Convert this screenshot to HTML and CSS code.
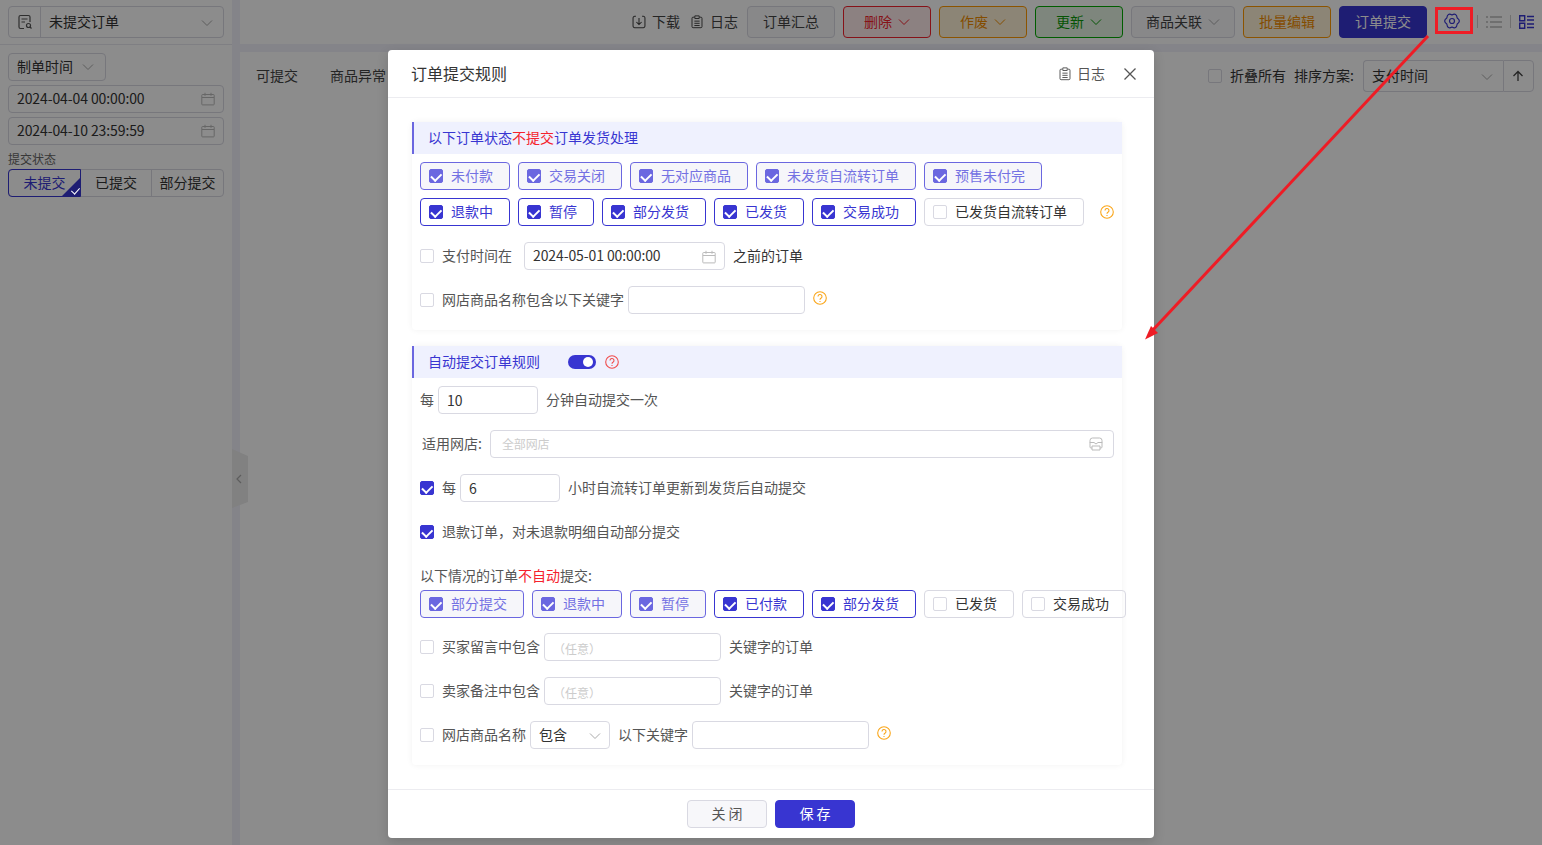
FILE: index.html
```html
<!DOCTYPE html>
<html lang="zh-CN">
<head>
<meta charset="utf-8">
<title>订单提交规则</title>
<link rel="stylesheet" href="styles.css">
</head>
<body>
<svg class="sprite" aria-hidden="true">
  <symbol id="i-chev" viewBox="0 0 12 12"><path d="M1 3.5 6 8.5 11 3.5" fill="none" stroke="currentColor" stroke-width="1"/></symbol>
  <symbol id="i-cal" viewBox="0 0 14 14"><path d="M1.5 2.5h11a.7.7 0 0 1 .7.7v9a.7.7 0 0 1-.7.7h-11a.7.7 0 0 1-.7-.7v-9a.7.7 0 0 1 .7-.7ZM1 5.5h12M4 .8v3M10 .8v3" fill="none" stroke="currentColor"/></symbol>
  <symbol id="i-log" viewBox="0 0 14 16"><path d="M4 2.5H2.5a1.2 1.2 0 0 0-1.2 1.2v9.6a1.2 1.2 0 0 0 1.2 1.2h9a1.2 1.2 0 0 0 1.2-1.2V3.7a1.2 1.2 0 0 0-1.2-1.2H10M4.5 1h5v3h-5ZM4 7h6M4 9.5h6M4 12h6" fill="none" stroke="currentColor" stroke-width="1.1"/></symbol>
  <symbol id="i-dl" viewBox="0 0 16 16"><path d="M4.500 1.500H3a1.800 1.800 0 0 0-1.800 1.800v9.400A1.800 1.800 0 0 0 3 14.500h10a1.800 1.800 0 0 0 1.800-1.800V3.300A1.800 1.800 0 0 0 13 1.500h-1.500M8 3.500v7M5 8l3 3 3-3" fill="none" stroke="currentColor" stroke-width="1.200"/></symbol>
  <symbol id="i-help" viewBox="0 0 14 14"><circle cx="7" cy="7" r="6.300" fill="none" stroke="currentColor" stroke-width="1.100"/><path d="M5 5.500a2 2 0 1 1 3 1.700c-.7.4-1 .8-1 1.500M7 10v1" fill="none" stroke="currentColor" stroke-width="1.100"/></symbol>
  <symbol id="i-gear" viewBox="0 0 16 16"><path d="M8 2Q12.500-.5 13.200 5 17.500 8 13.200 11 12.500 16.500 8 14 3.500 16.500 2.800 11-1.500 8 2.800 5 3.500-.5 8 2Z" fill="none" stroke="currentColor" stroke-width="1.200" stroke-linejoin="round"/><circle cx="8" cy="8" r="2.500" fill="none" stroke="currentColor" stroke-width="1.200"/></symbol>
  <symbol id="i-list" viewBox="0 0 16 14"><path d="M0 2h2M4 2h12M0 7h2M4 7h12M0 12h2M4 12h12" fill="none" stroke="currentColor" stroke-width="1.300"/></symbol>
  <symbol id="i-grid" viewBox="0 0 15 14"><path d="M.7.7h5v5h-5ZM.7 8.300h5v5h-5ZM8 1.500h7M8 5h7M8 9h7M8 12.500h7" fill="none" stroke="currentColor" stroke-width="1.400"/></symbol>
  <symbol id="i-shop" viewBox="0 0 14 14"><path d="M1 6V3.500A2.500 2.500 0 0 1 3.500 1h7A2.500 2.500 0 0 1 13 3.500V6M1 5.500h4l2 1.500 2-1.500h4V10a1 1 0 0 1-1 1h-1M1 5.500V10a1 1 0 0 0 1 1h1M3 9h8v4H3Z" fill="none" stroke="currentColor"/></symbol>
  <symbol id="i-doc" viewBox="0 0 16 16"><path d="M7 14.500H3.500A1.500 1.500 0 0 1 2 13V3a1.500 1.500 0 0 1 1.500-1.500h8A1.500 1.500 0 0 1 13 3v5M4.500 5h6M4.500 8h3.500" fill="none" stroke="currentColor" stroke-width="1.200"/><circle cx="11.500" cy="11.500" r="2" fill="none" stroke="currentColor" stroke-width="1.200"/><path d="m13 13 1.500 1.500" stroke="currentColor" stroke-width="1.200"/></symbol>
</svg>

<div class="app">
  <aside class="side">
    <div class="side-top">
      <div class="viewsel">
        <span class="viewsel-ico"><svg class="ico16"><use href="#i-doc"/></svg></span>
        <span class="viewsel-txt">未提交订单</span>
        <svg class="chev"><use href="#i-chev"/></svg>
      </div>
    </div>
    <div class="side-body">
      <div class="box box-time">制单时间<svg class="chev"><use href="#i-chev"/></svg></div>
      <div class="box box-date"><span>2024-04-04 00:00:00</span><svg class="cal"><use href="#i-cal"/></svg></div>
      <div class="box box-date"><span>2024-04-10 23:59:59</span><svg class="cal"><use href="#i-cal"/></svg></div>
      <div class="side-label">提交状态</div>
      <div class="seg">
        <span class="seg-item seg-on">未提交</span>
        <span class="seg-item seg-mid">已提交</span>
        <span class="seg-item seg-last">部分提交</span>
      </div>
    </div>
  </aside>
  <main class="main">
    <header class="tools">
      <span class="tlink tl-dl"><svg class="ico14"><use href="#i-dl"/></svg>下载</span>
      <span class="tlink tl-log"><svg class="ico14"><use href="#i-log"/></svg>日志</span>
      <span class="btn w88">订单汇总</span>
      <span class="btn w88 b-red">删除<svg class="chev"><use href="#i-chev"/></svg></span>
      <span class="btn w88 b-org">作废<svg class="chev"><use href="#i-chev"/></svg></span>
      <span class="btn w88 b-grn">更新<svg class="chev"><use href="#i-chev"/></svg></span>
      <span class="btn w104">商品关联<svg class="chev"><use href="#i-chev"/></svg></span>
      <span class="btn w88 b-org">批量编辑</span>
      <span class="btn w88 b-pri">订单提交</span>
      <svg class="ico-gear"><use href="#i-gear"/></svg>
      <i class="vsep vsep-a"></i>
      <svg class="ico-list"><use href="#i-list"/></svg>
      <i class="vsep"></i>
      <svg class="ico-grid"><use href="#i-grid"/></svg>
    </header>
    <section class="content">
      <div class="content-bar">
        <span class="tab">可提交</span>
        <span class="tab">商品异常</span>
        <div class="sortbar">
          <i class="cb"></i>
          <span class="sb-fold">折叠所有</span>
          <span class="sb-lab">排序方案:</span>
          <div class="sortsel"><span class="sortsel-txt">支付时间</span><svg class="chev"><use href="#i-chev"/></svg></div>
          <div class="sortbtn"><svg class="arrow-up" viewBox="0 0 12 12"><path d="M6 11V1.500M1.500 6 6 1.500 10.500 6" fill="none" stroke="currentColor" stroke-width="1.300"/></svg></div>
        </div>
      </div>
    </section>
  </main>
</div>

<span class="handle"><svg class="handle-chev" viewBox="0 0 8 12"><path d="M6 2 2 6l4 4" fill="none" stroke="currentColor" stroke-width="1.200"/></svg></span>

<div class="mask"></div>

<div class="modal">
  <div class="m-head">
    <span class="m-title">订单提交规则</span>
    <span class="m-log"><svg class="ico14"><use href="#i-log"/></svg>日志</span>
    <svg class="m-close" viewBox="0 0 12 12"><path d="M.5.500l11 11M11.500.500l-11 11" stroke="currentColor" stroke-width="1.300"/></svg>
  </div>
  <div class="m-body">
    <section class="card">
      <h3 class="card-h">以下订单状态<em>不提交</em>订单发货处理</h3>
      <div class="chips">
        <label class="chip dis"><i class="cb on"></i>未付款</label>
        <label class="chip dis"><i class="cb on"></i>交易关闭</label>
        <label class="chip dis"><i class="cb on"></i>无对应商品</label>
        <label class="chip dis"><i class="cb on"></i>未发货自流转订单</label>
        <label class="chip dis"><i class="cb on"></i>预售未付完</label>
      </div>
      <div class="chips">
        <label class="chip act"><i class="cb on"></i>退款中</label>
        <label class="chip act"><i class="cb on"></i>暂停</label>
        <label class="chip act"><i class="cb on"></i>部分发货</label>
        <label class="chip act"><i class="cb on"></i>已发货</label>
        <label class="chip act"><i class="cb on"></i>交易成功</label>
        <label class="chip"><i class="cb"></i>已发货自流转订单</label>
        <svg class="help help-chips"><use href="#i-help"/></svg>
      </div>
      <div class="row mt16">
        <i class="cb"></i><span class="t ml8">支付时间在</span>
        <div class="field w201 ml12"><span>2024-05-01 00:00:00</span><svg class="cal"><use href="#i-cal"/></svg></div>
        <span class="t dark ml8">之前的订单</span>
      </div>
      <div class="row mt16 pb16">
        <i class="cb"></i><span class="t ml8">网店商品名称包含以下关键字</span>
        <input class="field w177 ml4" type="text">
        <svg class="help ml8 up2"><use href="#i-help"/></svg>
      </div>
    </section>

    <section class="card mt16">
      <h3 class="card-h">自动提交订单规则<span class="toggle"></span><svg class="help red"><use href="#i-help"/></svg></h3>
      <div class="row mt8">
        <span class="t">每</span><input class="field w100 ml4" type="text" value="10"><span class="t ml8">分钟自动提交一次</span>
      </div>
      <div class="row mt16">
        <span class="t lab-shop">适用网店:</span>
        <div class="field grow ml8"><span class="ph">全部网店</span><svg class="cal shop-ico"><use href="#i-shop"/></svg></div>
      </div>
      <div class="row mt16">
        <i class="cb on"></i><span class="t ml8">每</span><input class="field w100 ml4" type="text" value="6"><span class="t ml8">小时自流转订单更新到发货后自动提交</span>
      </div>
      <div class="row mt16">
        <i class="cb on"></i><span class="t ml8">退款订单，对未退款明细自动部分提交</span>
      </div>
      <div class="row mt16"><span class="t">以下情况的订单<em>不自动</em>提交:</span></div>
      <div class="chips mt0">
        <label class="chip dis"><i class="cb on"></i>部分提交</label>
        <label class="chip dis"><i class="cb on"></i>退款中</label>
        <label class="chip dis"><i class="cb on"></i>暂停</label>
        <label class="chip act"><i class="cb on"></i>已付款</label>
        <label class="chip act"><i class="cb on"></i>部分发货</label>
        <label class="chip"><i class="cb"></i>已发货</label>
        <label class="chip"><i class="cb"></i>交易成功</label>
      </div>
      <div class="row mt15">
        <i class="cb"></i><span class="t ml8">买家留言中包含</span>
        <input class="field w177 ml4 phi" type="text" placeholder="（任意）"><span class="t ml8">关键字的订单</span>
      </div>
      <div class="row mt16">
        <i class="cb"></i><span class="t ml8">卖家备注中包含</span>
        <input class="field w177 ml4 phi" type="text" placeholder="（任意）"><span class="t ml8">关键字的订单</span>
      </div>
      <div class="row mt16 pb16">
        <i class="cb"></i><span class="t ml8">网店商品名称</span>
        <div class="field w80 ml4"><span class="dark">包含</span><svg class="chev"><use href="#i-chev"/></svg></div>
        <span class="t ml8">以下关键字</span>
        <input class="field w177 ml4" type="text">
        <svg class="help ml8 up2"><use href="#i-help"/></svg>
      </div>
    </section>
  </div>
  <div class="m-foot">
    <span class="fbtn">关 闭</span>
    <span class="fbtn fpri">保 存</span>
  </div>
</div>

<svg class="note" viewBox="0 0 1542 845" aria-hidden="true">
  <rect x="1436.500" y="8.500" width="35" height="24" fill="none" stroke="#ee1c25" stroke-width="3"/>
  <path d="M1428 36 1151 332" stroke="#ee1c25" stroke-width="3" fill="none"/>
  <path d="M1145 339.500 1151 326 1158 333Z" fill="#ee1c25"/>
</svg>
</body>
</html>
```
FILE: styles.css
```css
* { box-sizing: border-box; }
html, body { margin: 0; height: 100%; overflow: hidden; }
body {
  font-family: "Noto Sans CJK SC", "Noto Sans", sans-serif;
  font-size: 14px;
  line-height: 20px;
  color: #333;
  background: #f0f0fa;
}
em { font-style: normal; color: #f5222d; }
i { font-style: normal; }
svg { flex: none; display: block; }
.sprite { position: absolute; width: 0; height: 0; }

.app { display: flex; gap: 8px; height: 845px; }

/* sidebar */
.side { width: 232px; background: #fff; flex: none; }
.side-top { height: 45px; padding: 6px 8px 0; border-bottom: 1px solid #e8e8ee; }
.viewsel { display: flex; align-items: center; height: 32px; border: 1px solid #d9d9e2; border-radius: 4px; }
.viewsel-ico { width: 32px; height: 30px; border-right: 1px solid #d9d9e2; display: flex; align-items: center; justify-content: center; color: #555; }
.viewsel-txt { margin-left: 8px; flex: 1; padding-bottom: 2px; }
.viewsel .chev { margin-right: 10px; }
.ico16 { width: 16px; height: 16px; }
.ico14 { width: 14px; height: 14px; }
.chev { width: 12px; height: 12px; color: #aaa; margin-top: 2px; }
.cal { width: 14px; height: 14px; color: #bbb; margin-left: auto; margin-top: 2px; }
.side-body { padding: 8px 8px 0; display: flex; flex-direction: column; gap: 4px; }
.box { display: flex; align-items: center; height: 28px; border: 1px solid #d9d9e2; border-radius: 4px; padding: 0 8px 2px; }
.box-date span, .field > span { letter-spacing: -.1px; }
.box-time { width: 98px; }
.box-time .chev { margin-left: 9px; }
.side-label { font-size: 12px; line-height: 16px; height: 18px; margin-top: 2px; margin-bottom: -4px; color: #666; }
.seg { display: flex; height: 28px; border: 1px solid #d9d9e2; border-radius: 4px; }
.seg-item { display: flex; align-items: center; justify-content: center; position: relative; padding-bottom: 2px; }
.seg-on { width: 73px; margin: -1px 0 -1px -1px; border: 1px solid #3835d1; border-radius: 4px 0 0 4px; color: #3835d1; overflow: hidden; }
.seg-on::after { content: ""; position: absolute; right: 0; bottom: 0; border: 9px solid #3835d1; border-top-color: transparent; border-left-color: transparent; }
.seg-on::before { content: ""; position: absolute; right: 2.500px; bottom: 2.500px; width: 4px; height: 7px; border: solid #fff; border-width: 0 1px 1px 0; transform: rotate(42deg); z-index: 1; }
.seg-mid { width: 70px; }
.seg-last { flex: 1; border-left: 1px solid #d9d9e2; }

/* main */
.main { flex: 1; display: flex; flex-direction: column; gap: 8px; min-width: 0; }
.tools { height: 44px; flex: none; background: #fff; display: flex; align-items: flex-start; justify-content: flex-end; padding: 6px 8px 0 0; gap: 8px; }
.tlink { display: flex; align-items: center; gap: 6px; height: 32px; color: #444; padding-bottom: 2px; }
.tlink svg { margin-top: 2px; }
.tl-dl { margin-right: 2px; }
.tl-log { margin-right: 1px; }
.btn { height: 32px; display: flex; align-items: center; justify-content: center; gap: 6px; border: 1px solid #d9d9e2; border-radius: 4px; background: #f7f7fa; color: #444; padding-bottom: 2px; }
.w88 { width: 88px; }
.w104 { width: 104px; }
.b-red { border-color: #f5222d; color: #f5222d; background: #ffecec; }
.b-org { border-color: #f90; color: #f08c00; background: #fff3d8; }
.b-grn { border-color: #0a0; color: #0a9a0a; background: #e6f5e3; }
.b-red .chev { color: #f5222d; }
.b-org .chev { color: #f08c00; }
.b-grn .chev { color: #0a9a0a; }
.b-pri { background: #3835d1; border-color: #3835d1; color: #fff; }
.ico-gear { width: 16px; height: 16px; color: #3835d1; margin: 7px 0 0 9px; }
.vsep { width: 1px; height: 13px; background: #ccc; margin: 9px 0 0 0; }
.vsep-a { margin-left: 9px; }
.ico-list { width: 16px; height: 14px; color: #bbb; margin: 9px 0 0 0; }
.ico-grid { width: 15px; height: 14px; color: #3835d1; margin: 9px 0 0 0; }
.content { flex: 1; background: #fff; padding: 8px 8px 0 16px; }
.content-bar { display: flex; align-items: center; gap: 32px; height: 32px; }
.tab { color: #444; padding-bottom: 2px; }
.sortbar { margin-left: auto; display: flex; align-items: center; }
.sb-fold { margin-left: 8px; padding-bottom: 2px; }
.sb-lab { margin-left: 8px; margin-right: 9px; padding-bottom: 2px; }
.sortsel { width: 140px; height: 32px; border: 1px solid #d9d9e2; border-right: 0; border-radius: 4px 0 0 4px; display: flex; align-items: center; padding: 0 10px 0 8px; }
.sortsel-txt { flex: 1; padding-bottom: 2px; }
.sortbtn { width: 31px; height: 32px; border: 1px solid #d9d9e2; border-radius: 0 4px 4px 0; display: flex; align-items: center; justify-content: center; color: #444; padding-right: 2px; }
.arrow-up { width: 12px; height: 12px; }

/* collapse handle */
.handle { position: absolute; left: 232px; top: 449px; width: 16px; height: 59px; background: #ebebeb; clip-path: polygon(0 0, 100% 12%, 100% 90%, 0 100%); display: flex; align-items: center; justify-content: center; color: #aaa; padding-right: 2px; }
.handle-chev { width: 8px; height: 12px; }

.mask { position: absolute; inset: 0; background: rgba(0, 0, 0, .45); }

/* modal */
.modal { position: absolute; left: 388px; top: 50px; width: 766px; height: 788px; background: #fff; border-radius: 4px; display: flex; flex-direction: column; box-shadow: 0 4px 12px rgba(0, 0, 0, .15); }
.m-head { height: 48px; flex: none; display: flex; align-items: center; padding: 0 18px 0 24px; border-bottom: 1px solid #ececf0; }
.m-title { font-size: 16px; flex: 1; padding-bottom: 2px; margin-left: -1px; }
.m-log { display: flex; align-items: center; gap: 5px; color: #555; padding-bottom: 2px; }
.m-log svg { margin-top: 2px; }
.m-close { width: 12px; height: 12px; margin-left: 19px; color: #555; }
.m-body { flex: 1; padding: 24px 32px 0 24px; }
.card { border-radius: 4px; box-shadow: 0 0 6px rgba(0, 0, 0, .06); }
.card-h { margin: 0; height: 32px; background: #eff1fe; border-left: 2px solid #6b67e0; padding: 0 0 2px 14px; font-size: 14px; font-weight: 400; color: #3835d1; display: flex; align-items: center; }
.m-foot { height: 49px; flex: none; border-top: 1px solid #ececf0; display: flex; justify-content: center; gap: 8px; padding-top: 10px; }
.fbtn { width: 80px; height: 28px; border: 1px solid #d9d9e2; border-radius: 4px; background: #f7f7fa; display: flex; align-items: center; justify-content: center; color: #555; padding-bottom: 2px; }
.fpri { background: #3835d1; border-color: #3835d1; color: #fff; }

/* rows */
.chips { display: flex; gap: 8px; padding-left: 8px; align-items: center; margin-top: 8px; white-space: nowrap; }
.chip { display: flex; align-items: center; height: 28px; padding: 0 16px 2px 8px; border: 1px solid #d9d9e2; border-radius: 4px; color: #333; }
.chip .cb { margin-right: 8px; margin-top: 2px; }
.dis { border-color: #6b67e0; background: #f6f6fa; color: #7471e3; }
.act { border-color: #3835d1; color: #3835d1; }
.cb { position: relative; width: 14px; height: 14px; flex: none; border: 1px solid #d9d9e2; border-radius: 2px; background: #fff; display: block; }
.cb.on { background: #3835d1; border-color: #3835d1; }
.dis .cb.on { background: #6b67e0; border-color: #6b67e0; }
.cb.on::after { content: ""; position: absolute; left: 3.300px; top: 1px; width: 4.500px; height: 7.500px; border: solid #fff; border-width: 0 2px 2px 0; transform: rotate(45deg); }
.row { display: flex; align-items: center; height: 28px; padding-left: 8px; }
.t { color: #555; white-space: nowrap; padding-bottom: 2px; }
.dark { color: #333; }
.field { height: 28px; border: 1px solid #d9d9e2; border-radius: 4px; padding: 0 8px; display: flex; align-items: center; background: #fff; font: inherit; color: #333; outline: 0; flex: none; }
.field > span { padding-bottom: 2px; }
.field > .ph { font-size: 12px; color: #ccc; padding: 0 0 0 3px; }
.field .chev { margin-left: auto; }
.shop-ico { margin: 0 2px 0 auto; }
.w201 { width: 201px; }
.w177 { width: 177px; }
.w100 { width: 100px; }
.w80 { width: 80px; }
.grow { width: 624px; }
.phi { padding-top: 2px; }
.phi::placeholder { font-size: 12px; color: #ccc; }
.lab-shop { margin-left: 2px; }
.mt0 { margin-top: 0; }
.mt8 { margin-top: 8px; }
.mt15 { margin-top: 15px; }
.mt16 { margin-top: 16px; }
.pb16 { height: 44px; padding-bottom: 16px; }
.ml4 { margin-left: 4px; }
.ml8 { margin-left: 8px; }
.ml12 { margin-left: 12px; }
.help { width: 14px; height: 14px; color: #faa61a; }
.help-chips { margin-left: 8px; }
.up2 { margin-top: -4px; }
.help.red { color: #f04c4c; margin-left: 9px; margin-top: 2px; }
.toggle { position: relative; width: 28px; height: 14px; border-radius: 7px; background: #3835d1; margin-left: 28px; margin-top: 2px; }
.toggle::after { content: ""; position: absolute; right: 3px; top: 2px; width: 10px; height: 10px; border-radius: 50%; background: #fff; }

/* annotation */
.note { position: absolute; left: 0; top: 0; width: 1542px; height: 845px; pointer-events: none; }
```
